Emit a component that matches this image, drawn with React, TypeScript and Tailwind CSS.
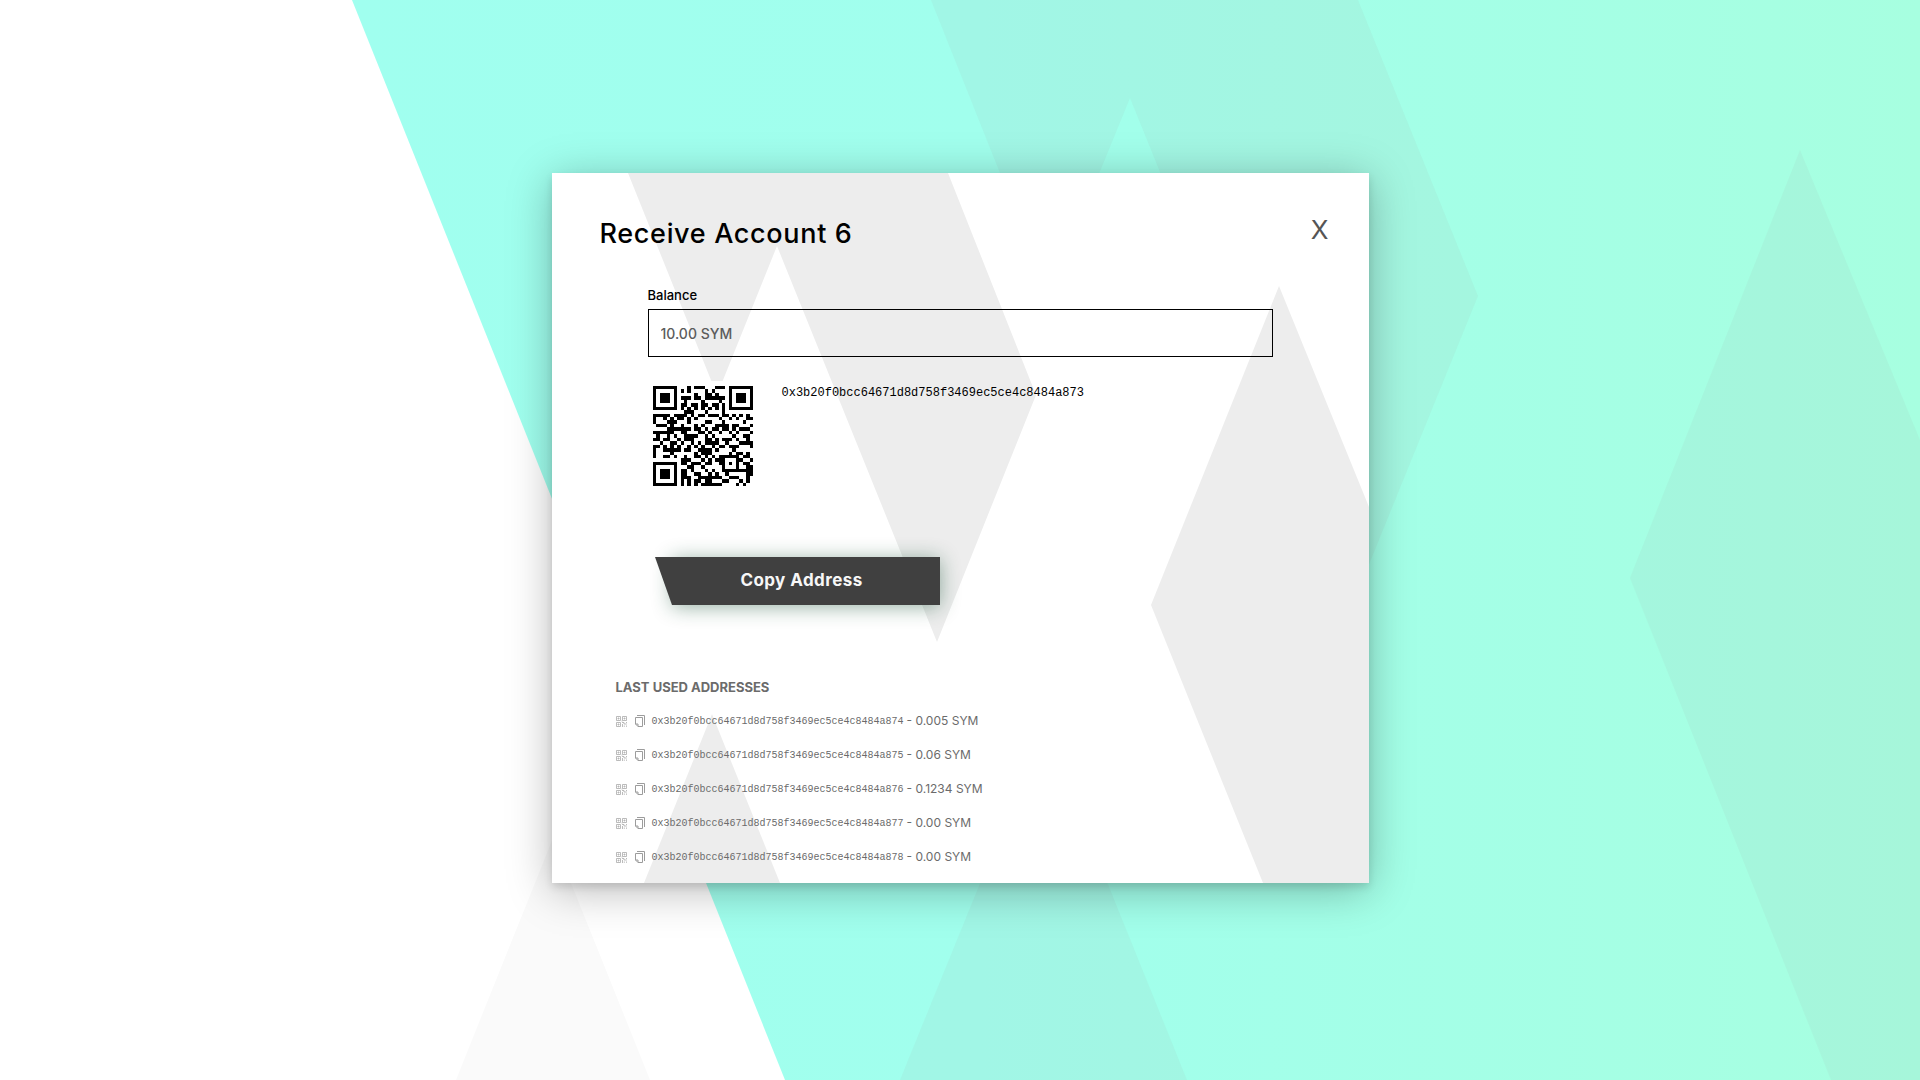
import React from "react";

const ADDRESS = "0x3b20f0bcc64671d8d758f3469ec5ce4c8484a873";

const LAST_USED = [
  { address: "0x3b20f0bcc64671d8d758f3469ec5ce4c8484a874", amount: "0.005 SYM" },
  { address: "0x3b20f0bcc64671d8d758f3469ec5ce4c8484a875", amount: "0.06 SYM" },
  { address: "0x3b20f0bcc64671d8d758f3469ec5ce4c8484a876", amount: "0.1234 SYM" },
  { address: "0x3b20f0bcc64671d8d758f3469ec5ce4c8484a877", amount: "0.00 SYM" },
  { address: "0x3b20f0bcc64671d8d758f3469ec5ce4c8484a878", amount: "0.00 SYM" },
];

/* QR code, version 3, error correction level L, mask 2 */
const SIZE = 29;
const DATA_WORDS = 55;
const EC_WORDS = 15;
const FORMAT = 0b111110110101010;

function gfMul(a: number, b: number): number {
  let r = 0;
  for (let i = 7; i >= 0; i--) {
    r = (r << 1) ^ ((r >>> 7) * 0x11d);
    r ^= ((b >>> i) & 1) * a;
  }
  return r;
}

function errorWords(data: number[]): number[] {
  const gen: number[] = new Array(EC_WORDS).fill(0);
  gen[EC_WORDS - 1] = 1;
  let root = 1;
  for (let i = 0; i < EC_WORDS; i++) {
    for (let j = 0; j < EC_WORDS; j++) {
      gen[j] = gfMul(gen[j], root);
      if (j + 1 < EC_WORDS) gen[j] ^= gen[j + 1];
    }
    root = gfMul(root, 2);
  }
  const rem: number[] = new Array(EC_WORDS).fill(0);
  for (const word of data) {
    const factor = word ^ (rem.shift() as number);
    rem.push(0);
    gen.forEach((g, i) => {
      rem[i] ^= gfMul(g, factor);
    });
  }
  return rem;
}

function qrModules(text: string): boolean[][] {
  const bits: number[] = [];
  const put = (value: number, length: number) => {
    for (let i = length - 1; i >= 0; i--) bits.push((value >>> i) & 1);
  };
  put(4, 4);
  put(text.length, 8);
  for (const ch of text) put(ch.charCodeAt(0), 8);
  put(0, 4);
  const words: number[] = [];
  for (let i = 0; i < bits.length; i += 8) words.push(parseInt(bits.slice(i, i + 8).join(""), 2));
  for (let pad = 0xec; words.length < DATA_WORDS; pad ^= 0xec ^ 0x11) words.push(pad);
  const all = words.concat(errorWords(words));

  const grid: boolean[][] = Array.from({ length: SIZE }, () => new Array(SIZE).fill(false));
  const fixed: boolean[][] = Array.from({ length: SIZE }, () => new Array(SIZE).fill(false));
  const set = (x: number, y: number, dark: boolean) => {
    if (x < 0 || y < 0 || x >= SIZE || y >= SIZE) return;
    grid[y][x] = dark;
    fixed[y][x] = true;
  };
  for (let i = 0; i < SIZE; i++) {
    set(6, i, i % 2 === 0);
    set(i, 6, i % 2 === 0);
  }
  for (const [cx, cy] of [[3, 3], [SIZE - 4, 3], [3, SIZE - 4]]) {
    for (let dy = -4; dy <= 4; dy++)
      for (let dx = -4; dx <= 4; dx++) {
        const d = Math.max(Math.abs(dx), Math.abs(dy));
        set(cx + dx, cy + dy, d !== 2 && d !== 4);
      }
  }
  for (let dy = -2; dy <= 2; dy++)
    for (let dx = -2; dx <= 2; dx++) set(22 + dx, 22 + dy, Math.max(Math.abs(dx), Math.abs(dy)) !== 1);

  const f = (i: number) => ((FORMAT >>> i) & 1) === 1;
  for (let i = 0; i <= 5; i++) set(8, i, f(i));
  set(8, 7, f(6));
  set(8, 8, f(7));
  set(7, 8, f(8));
  for (let i = 9; i < 15; i++) set(14 - i, 8, f(i));
  for (let i = 0; i < 8; i++) set(SIZE - 1 - i, 8, f(i));
  for (let i = 8; i < 15; i++) set(8, SIZE - 15 + i, f(i));
  set(8, SIZE - 8, true);

  let n = 0;
  for (let right = SIZE - 1; right >= 1; right -= 2) {
    if (right === 6) right = 5;
    for (let v = 0; v < SIZE; v++)
      for (let j = 0; j < 2; j++) {
        const x = right - j;
        const y = ((right + 1) & 2) === 0 ? SIZE - 1 - v : v;
        if (fixed[y][x]) continue;
        const bit = n < all.length * 8 ? (all[n >>> 3] >>> (7 - (n & 7))) & 1 : 0;
        n++;
        grid[y][x] = (bit === 1) !== (x % 3 === 0);
      }
  }
  return grid;
}

function QrCode({ value }: { value: string }) {
  const d = qrModules(value)
    .map((row, y) => row.map((dark, x) => (dark ? `M${x} ${y}h1v1h-1z` : "")).join(""))
    .join("");
  return (
    <svg viewBox="0 0 29 29" className="size-[100px]" shapeRendering="crispEdges" role="img" aria-label="Address QR code">
      <path d={d} fill="#000" />
    </svg>
  );
}

function Backdrop() {
  return (
    <svg
      className="absolute inset-0 -z-10 h-full w-full"
      viewBox="0 0 1920 1080"
      preserveAspectRatio="xMidYMid slice"
      aria-hidden="true"
    >
      <defs>
        <linearGradient id="mint" x1="352" y1="0" x2="1920" y2="0" gradientUnits="userSpaceOnUse">
          <stop offset="0" stopColor="#a0ffef" />
          <stop offset="0.4" stopColor="#a1ffed" />
          <stop offset="1" stopColor="#a7ffe0" />
        </linearGradient>
      </defs>
      <path d="M553 838L650 1080H456Z" fill="#fafafa" />
      <path d="M352 0H1920V1080H785Z" fill="url(#mint)" />
      <g fill="#a8b0b0" fillOpacity="0.11">
        <path d="M931 0H1358L1478 296L1344 626L1130 98L1049 296Z" />
        <path d="M1800 150L1920 440V1080H1831L1630 578Z" />
        <path d="M1044 726L1187 1080H900Z" />
      </g>
    </svg>
  );
}

function CardPattern() {
  return (
    <svg
      className="absolute inset-0 -z-10 h-full w-full"
      viewBox="0 0 817 710"
      preserveAspectRatio="xMidYMid slice"
      aria-hidden="true"
    >
      <g fill="#ededed">
        <path d="M76 0H396L484 222L385 469L225 73L165 222Z" />
        <path d="M727 113L817 334V710H711L599 432Z" />
        <path d="M160 541L228 710H92Z" />
      </g>
    </svg>
  );
}

function QrIcon() {
  return (
    <svg viewBox="0 0 11 11" className="size-[11px]" fill="none" stroke="#aaa" strokeWidth="0.8" aria-hidden="true">
      <path d="M.5.5h4v4h-4zM6.5.5h4v4h-4zM.5 6.5h4v4h-4z" />
      <path d="M2 2h1v1H2zM8 2h1v1H8zM2 8h1v1H2z" />
      <path d="M6 6.5h2v1.5h2.8M6.5 8v3M8.3 9.5v1.3M10.5 6v1M10.5 9.5v1.3M5.5 5h1" />
    </svg>
  );
}

function CopyIcon() {
  return (
    <svg viewBox="0 0 10 12" className="h-3 w-[10px]" fill="none" stroke="#9c9c9c" aria-hidden="true">
      <path d="M.5 2.5h7v9H3L.5 9z" />
      <path d="M.5 9H3v2.5" />
      <path d="M2 .5h7.5V10" />
    </svg>
  );
}

export default function App() {
  return (
    <main className="relative isolate flex min-h-screen flex-col items-center overflow-hidden bg-white px-4 pt-[173px] pb-12 font-['Inter',sans-serif] text-black">
      <Backdrop />
      <section
        aria-labelledby="receive-title"
        className="relative isolate w-full max-w-[817px] overflow-hidden bg-white shadow-[0_7px_42px_rgba(0,0,0,0.28),0_4px_8px_rgba(0,0,0,0.12)]"
      >
        <CardPattern />

        <header className="flex items-start justify-between pt-11 pr-10 pl-12">
          <h1 id="receive-title" className="text-[27px] leading-[34px] font-medium tracking-wide">
            Receive Account 6
          </h1>
          <button type="button" aria-label="Close" className="mt-px text-[26px] leading-6 text-[#555]">
            X
          </button>
        </header>

        <div className="px-24 pt-[34px]">
          <label htmlFor="balance" className="block text-[13px] leading-5 font-medium">
            Balance
          </label>
          <input
            id="balance"
            readOnly
            defaultValue="10.00 SYM"
            className="mt-1 block h-12 w-full border border-black bg-transparent px-3 text-sm font-medium text-[#5c5c5c] outline-none"
          />

          <div className="mt-6 flex items-start gap-6">
            <div className="bg-white p-[5px]">
              <QrCode value={ADDRESS} />
            </div>
            <p className="font-['Liberation_Mono',monospace] text-xs leading-6">{ADDRESS}</p>
          </div>

          <button
            type="button"
            className="relative mt-[66px] ml-6 block h-12 w-[268px] bg-[#404040] pr-2 text-center text-[17px] font-bold tracking-wide text-[#f7f7f7] shadow-[0_2px_20px_rgba(20,80,50,0.45)]"
          >
            <svg viewBox="0 0 18 48" className="absolute top-0 right-full -mr-px h-12 w-[18px]" aria-hidden="true">
              <path d="M0 0H18V48H17Z" fill="#404040" />
            </svg>
            Copy Address
          </button>
        </div>

        <div className="px-16 pt-[72px] pb-[9px] text-[#6b6b6b]">
          <h2 className="text-[13px] leading-5 font-bold">LAST USED ADDRESSES</h2>
          <ul className="mt-[7px]">
            {LAST_USED.map((item) => (
              <li key={item.address} className="flex h-[34px] items-center">
                <button type="button" aria-label="Show QR code">
                  <QrIcon />
                </button>
                <button type="button" aria-label="Copy address" className="ml-2">
                  <CopyIcon />
                </button>
                <span className="ml-[7px] font-['Liberation_Mono',monospace] text-[10px]">{item.address}</span>
                <span className="ml-[3px] text-xs">- {item.amount}</span>
              </li>
            ))}
          </ul>
        </div>
      </section>
    </main>
  );
}
